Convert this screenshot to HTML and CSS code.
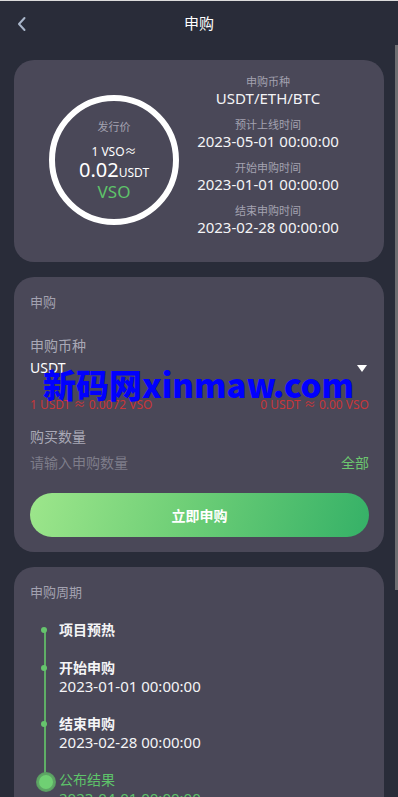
FILE: index.html
```html
<!DOCTYPE html>
<html lang="zh-CN">
<head>
<meta charset="utf-8">
<title>申购</title>
<link rel="stylesheet" href="styles.css">
</head>
<body>
<header class="topbar">
  <svg class="back" width="12" height="16" viewBox="0 0 12 16"><path d="M8.5 2 L3 8 L8.5 14" fill="none" stroke="#a9b6ca" stroke-width="2" stroke-linecap="round" stroke-linejoin="round"/></svg>
  <h1 class="title">申购</h1>
</header>
<main class="scroll">
  <div class="inner">
    <section class="card info">
      <div class="ring">
        <div class="ring-label">发行价</div>
        <div class="ring-rate">1 VSO≈</div>
        <div class="ring-price">0.02<span class="unit">USDT</span></div>
        <div class="ring-coin">VSO</div>
      </div>
      <div class="facts">
        <div class="fact"><div class="fact-label">申购币种</div><div class="fact-value">USDT/ETH/BTC</div></div>
        <div class="fact"><div class="fact-label">预计上线时间</div><div class="fact-value">2023-05-01 00:00:00</div></div>
        <div class="fact"><div class="fact-label">开始申购时间</div><div class="fact-value">2023-01-01 00:00:00</div></div>
        <div class="fact"><div class="fact-label">结束申购时间</div><div class="fact-value">2023-02-28 00:00:00</div></div>
      </div>
    </section>

    <section class="card buy">
      <div class="card-title">申购</div>
      <div class="field-label first">申购币种</div>
      <div class="select">
        <span>USDT</span>
        <span class="caret"></span>
      </div>
      <div class="rates">
        <span>1 USDT ≈ 0.0072 VSO</span>
        <span>0 USDT ≈ 0.00 VSO</span>
      </div>
      <div class="field-label second">购买数量</div>
      <div class="amount">
        <span class="placeholder">请输入申购数量</span>
        <span class="all">全部</span>
      </div>
      <button class="submit">立即申购</button>
    </section>

    <section class="card period">
      <div class="card-title">申购周期</div>
      <ul class="timeline">
        <li class="step"><div class="step-title">项目预热</div></li>
        <li class="step"><div class="step-title">开始申购</div><div class="step-date">2023-01-01 00:00:00</div></li>
        <li class="step"><div class="step-title">结束申购</div><div class="step-date">2023-02-28 00:00:00</div></li>
        <li class="step current"><div class="step-title">公布结果</div><div class="step-date">2023-04-01 00:00:00</div></li>
      </ul>
    </section>
  </div>
</main>
<div class="scroll-thumb"></div>
<div class="watermark">新码网xinmaw.com</div>
</body>
</html>
```
FILE: styles.css
```css
* { box-sizing: border-box; }
html, body { margin: 0; padding: 0; }
body {
  background: #292c39;
  font-family: "Noto Sans", "Noto Sans CJK SC", sans-serif;
  color: #f2f2f5;
  width: 398px;
  height: 797px;
  overflow: hidden;
  position: relative;
}
.topbar {
  height: 45px;
  border-top: 1px solid #dcdcdc;
  display: flex;
  align-items: center;
  justify-content: center;
  position: relative;
  background: #292c39;
}
.back { position: absolute; left: 16px; top: 15px; }
.title {
  margin: 0;
  font-size: 15px;
  font-weight: 400;
  color: #ffffff;
  line-height: 20px;
  margin-top: -1px;
}
.scroll {
  height: 752px;
  overflow: hidden;
}
.scroll-thumb {
  position: absolute;
  right: 0;
  top: 45px;
  width: 3px;
  height: 545px;
  background: #6e6e72;
}
.inner {
  padding: 15px 14px 250px 14px;
  display: flex;
  flex-direction: column;
  gap: 15px;
}
.card {
  background: #4a4858;
  border-radius: 20px;
}
/* info card */
.info {
  height: 202px;
  display: flex;
  align-items: flex-start;
}
.ring {
  width: 130px;
  height: 130px;
  margin: 35px 0 0 35px;
  border: 6px solid #ffffff;
  border-radius: 50%;
  display: flex;
  flex-direction: column;
  align-items: center;
  justify-content: center;
  text-align: center;
  flex-shrink: 0;
}
.ring-label { font-size: 11px; line-height: 14px; color: #a3a2b0; }
.ring-rate { font-size: 12px; line-height: 16px; margin-top: 10px; color: #fff; }
.ring-price { font-size: 20px; line-height: 20px; color: #fff; }
.ring-price .unit { font-size: 12px; }
.ring-coin { font-size: 17px; line-height: 18px; color: #5ec36a; }
.facts {
  margin: 15px 0 0 9px;
  width: 160px;
  display: flex;
  flex-direction: column;
  gap: 11px;
  text-align: center;
}
.fact-label { font-size: 11px; line-height: 14px; color: #a3a2b0; }
.fact-value { font-size: 15px; line-height: 18px; color: #f4f4f6; white-space: nowrap; }
/* buy card */
.buy {
  padding: 16px 15px 15px 16px;
  display: flex;
  flex-direction: column;
}
.card-title { font-size: 13px; line-height: 18px; color: #a3a2b0; }
.field-label { font-size: 14px; line-height: 20px; color: #a9a8b6; }
.field-label.first { margin-top: 25px; }
.field-label.second { margin-top: 14px; }
.select {
  display: flex;
  justify-content: space-between;
  align-items: center;
  font-size: 14px;
  line-height: 20px;
  color: #fff;
  margin-top: 2px;
}
.caret {
  width: 0; height: 0;
  border-left: 5px solid transparent;
  border-right: 5px solid transparent;
  border-top: 7px solid #fff;
  margin-right: 2px;
}
.rates {
  display: flex;
  justify-content: space-between;
  font-size: 12px;
  line-height: 16px;
  color: #c8363a;
  margin-top: 19px;
}
.amount {
  display: flex;
  justify-content: space-between;
  font-size: 14px;
  line-height: 20px;
  margin-top: 6px;
}
.placeholder { color: #7e7d8a; }
.all { color: #6cc66f; }
.submit {
  margin-top: 20px;
  height: 44px;
  width: 100%;
  border: none;
  border-radius: 22px;
  background: linear-gradient(105deg, #9de68b 0%, #6fcf77 45%, #35b167 100%);
  color: #fff;
  font-family: inherit;
  font-size: 14px;
  font-weight: 700;
}
/* period card */
.period {
  padding: 16px 15px 24px 16px;
}
.timeline {
  list-style: none;
  margin: 20px 0 0 0;
  padding: 0 0 0 29px;
  display: flex;
  flex-direction: column;
  gap: 20px;
  position: relative;
}
.timeline::before {
  content: "";
  position: absolute;
  left: 14px;
  top: 9px;
  bottom: 27px;
  width: 2px;
  background: #5fae66;
}
.step { position: relative; }
.step::before {
  content: "";
  position: absolute;
  left: -18px;
  top: 6px;
  width: 6px;
  height: 6px;
  border-radius: 50%;
  background: #66c46d;
}
.step.current::before {
  left: -22px;
  top: 2px;
  width: 14px;
  height: 14px;
  background: #6fd073;
  box-shadow: 0 0 0 1px #5a9e62;
  border: 2px solid #5ea565;
}
.step-title { font-size: 14px; line-height: 18px; font-weight: 700; color: #f4f4f6; }
.step-date { font-size: 15px; line-height: 18px; color: #f4f4f6; }
.step.current .step-title, .step.current .step-date { color: #5ec36a; font-weight: 400; }
.watermark {
  position: absolute;
  left: 43px;
  top: 362px;
  font-family: "Noto Sans CJK SC", sans-serif;
  font-weight: 900;
  font-size: 33px;
  line-height: 44px;
  color: #0000ff;
  white-space: nowrap;
  pointer-events: none;
}
```
